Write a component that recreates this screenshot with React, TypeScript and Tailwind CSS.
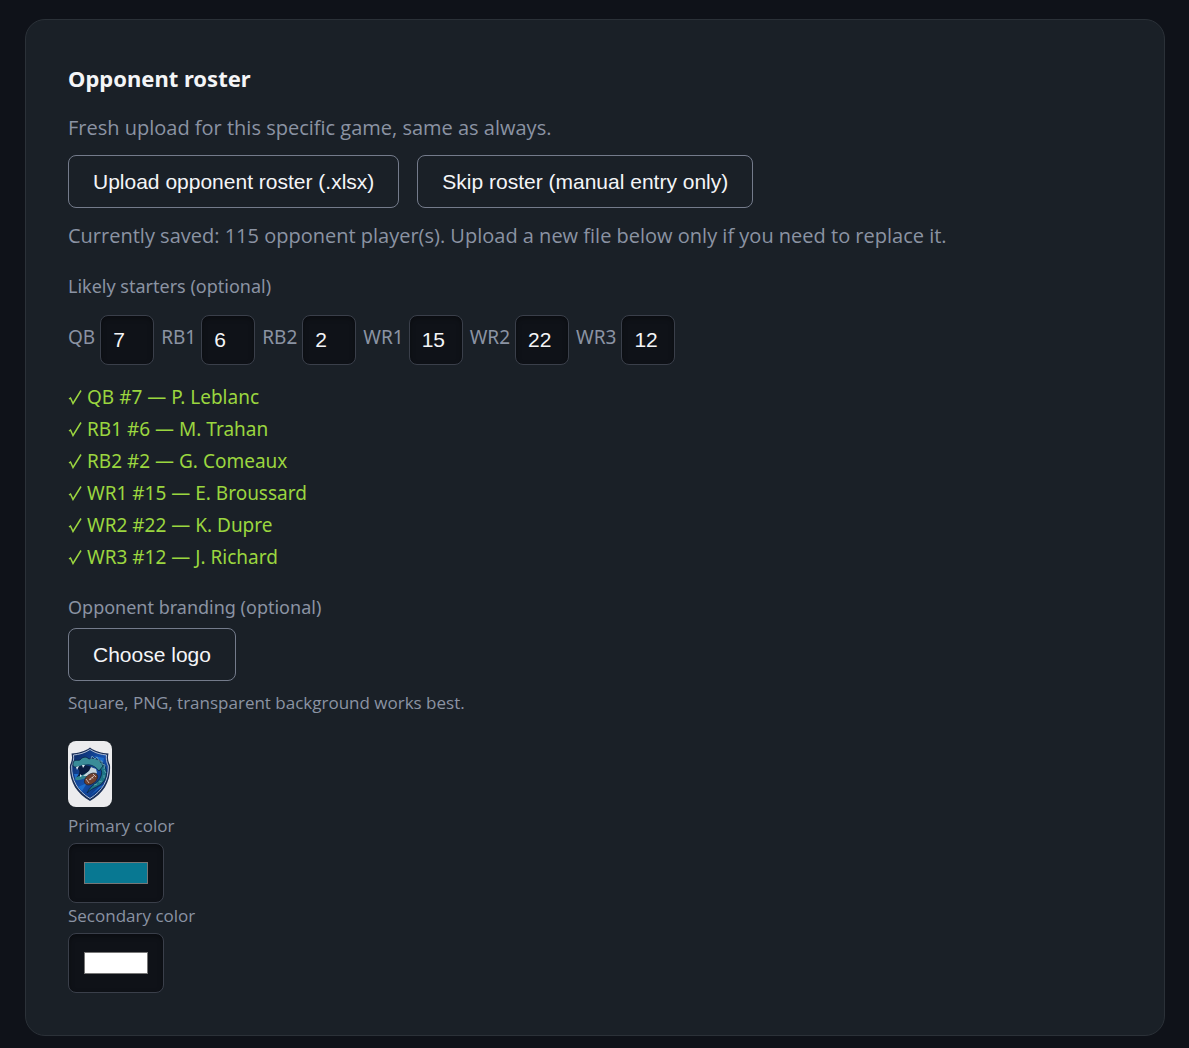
import React, { useState } from 'react';

interface Starter {
  position: string;
  number: string;
  player: string;
}

const initialStarters: Starter[] = [
  { position: 'QB', number: '7', player: 'P. Leblanc' },
  { position: 'RB1', number: '6', player: 'M. Trahan' },
  { position: 'RB2', number: '2', player: 'G. Comeaux' },
  { position: 'WR1', number: '15', player: 'E. Broussard' },
  { position: 'WR2', number: '22', player: 'K. Dupre' },
  { position: 'WR3', number: '12', player: 'J. Richard' },
];

const OutlineButton: React.FC<{ children: React.ReactNode }> = ({ children }) => (
  <button
    type="button"
    className="h-[53px] rounded-lg border border-[#747b8b] px-6 font-['Liberation_Sans',sans-serif] text-[21px] text-[#f4f5f7]"
  >
    {children}
  </button>
);

const ColorField: React.FC<{ id: string; label: string; initial: string }> = ({ id, label, initial }) => {
  const [color, setColor] = useState(initial);

  return (
    <div>
      <label htmlFor={id} className="mb-1 block text-[17px] leading-[26px]">
        {label}
      </label>
      <input
        id={id}
        type="color"
        value={color}
        onChange={(e) => setColor(e.target.value)}
        className="block h-[60px] w-24 rounded-lg border border-[#3a3f4a] bg-[#0f1218] px-[13px] py-[14px] shadow-[inset_0_2px_5px_rgba(0,0,0,0.35)]"
      />
    </div>
  );
};

const TeamLogo: React.FC = () => (
  <svg viewBox="0 0 44 66" className="block h-[66px] w-11 rounded-lg bg-[#ececee]" role="img" aria-label="Opponent logo">
    <defs>
      <linearGradient id="shield" x1="0" y1="0" x2="1" y2="1">
        <stop offset="0" stopColor="#0c2356" />
        <stop offset="0.5" stopColor="#1450ac" />
        <stop offset="1" stopColor="#0b2a6b" />
      </linearGradient>
    </defs>
    <path
      d="M22 6.5C17 10.5 10 12 3.5 12.5C4.5 17 4 20 2 24C1 40 8 52 22 60C36 52 43 40 42 24C40 20 39.5 17 40.5 12.5C34 12 27 10.5 22 6.5Z"
      fill="#1a2f58"
    />
    <path
      d="M22 8.5C17 12 11 13.5 5.5 14C6 18 5.5 21 3.7 25C3.3 39 9.5 50 22 57.5C34.5 50 40.7 39 40.3 25C38.5 21 38 18 38.5 14C33 13.5 27 12 22 8.5Z"
      fill="url(#shield)"
      stroke="#bccbe1"
      strokeWidth="0.9"
    />
    <path d="M6 33L12 33L8 40ZM10 46L19 42L14 50ZM22 55L31 46L37 43ZM26 15L36 17L35 22Z" fill="#1d6dcc" />
    {/* tail */}
    <path
      d="M31 19C38 23 41 33 36 40C32 46 25 46 19 52C23 43 31 42 33 35C35 30 32 26 28 25Z"
      fill="#1d7586"
      stroke="#0a2544"
      strokeWidth="0.8"
    />
    {/* mouth */}
    <path d="M8 26C14 23 21 24 26 27L24 34C18 33 12 35 8 37C13 31 12 29 8 26Z" fill="#0a1c40" />
    {/* lower jaw */}
    <path d="M7 37C12 34 17 34 21 30L24 34C20 36 13 40 8 39Z" fill="#318491" />
    <path d="M15 35L21 30L23 26L28 28L29 32L24 35Z" fill="#c4d3dd" />
    {/* upper jaw */}
    <path
      d="M5 22C6 18 9 20 12 19C14 16 18 15 21 18C26 16 32 18 35 25L31 30C28 26 23 23 18 24C13 24 8 28 5 25Z"
      fill="#3a8c98"
      stroke="#0a2544"
      strokeWidth="0.8"
    />
    <path d="M8 26L9 29L11 25ZM14 24L15 27L17 24ZM12 36L12 33L14 35Z" fill="#dae8f0" />
    <path d="M23 18L24 15L27 18L29 16L31 20L34 20L34 23L37 24L36 28" fill="none" stroke="#75a5b7" strokeWidth="0.8" />
    <path d="M36 29L38 32M36 34L36 37M34 40L31 41M29 43L26 44" stroke="#67a9b2" strokeWidth="0.8" />
    <ellipse cx="23" cy="38" rx="7.5" ry="4.8" transform="rotate(-38 23 38)" fill="#70402f" stroke="#26232b" strokeWidth="0.7" />
    <path d="M21 39L26 35M22 37.5L23 39M24 36L25 37.5M18 38L21 42M25 33L28 36" stroke="#eee9e6" strokeWidth="0.7" />
  </svg>
);

export default function App() {
  const [starters, setStarters] = useState(initialStarters);

  const updateNumber = (position: string, number: string) => {
    setStarters(starters.map((s) => (s.position === position ? { ...s, number } : s)));
  };

  return (
    <main className="min-h-screen bg-[#0f1219] pt-[19px] pr-6 pb-3 pl-[25px] font-['Open_Sans','Noto_Sans',sans-serif] text-[#8b93a3]">
      <section className="rounded-[20px] border border-[#2b3138] bg-[#1a2027] px-[42px] pt-10 pb-[42px]">
        <h2 className="font-['Noto_Sans',sans-serif] text-[22px] leading-9 font-bold text-[#f4f5f7]">Opponent roster</h2>
        <p className="mt-[15px] text-[20px] leading-[34px]">Fresh upload for this specific game, same as always.</p>
        <div className="mt-[10px] flex flex-wrap gap-[18px]">
          <OutlineButton>Upload opponent roster (.xlsx)</OutlineButton>
          <OutlineButton>Skip roster (manual entry only)</OutlineButton>
        </div>
        <p className="mt-[11px] text-[20px] leading-[34px]">
          Currently saved: 115 opponent player(s). Upload a new file below only if you need to replace it.
        </p>

        <h3 className="mt-[17px] font-['Noto_Sans',sans-serif] text-[18px] leading-8">Likely starters (optional)</h3>
        <div className="mt-[13px] flex flex-wrap gap-[7px]">
          {starters.map((s) => (
            <div key={s.position} className="flex gap-[5px]">
              <label htmlFor={s.position} className="pt-[6px] font-['Noto_Sans',sans-serif] text-[19px] leading-8">
                {s.position}
              </label>
              <input
                id={s.position}
                type="text"
                inputMode="numeric"
                value={s.number}
                onChange={(e) => updateNumber(s.position, e.target.value)}
                className="h-[50px] w-[54px] rounded-lg border border-[#3a3f4a] bg-[#0f1218] px-3 font-['Liberation_Sans',sans-serif] text-[21px] text-[#f4f5f7] shadow-[inset_0_2px_5px_rgba(0,0,0,0.35)]"
              />
            </div>
          ))}
        </div>
        <ul className="mt-4 font-['Noto_Sans',sans-serif] text-[19px] leading-8 text-[#9bd63f]">
          {starters.map((s) => (
            <li key={s.position} className="flex items-center gap-[5px]">
              <svg viewBox="0 0 14 16" className="h-4 w-[14px]" fill="none" stroke="currentColor" aria-hidden="true">
                <path d="M1 10L2.5 9L5 14.5L13 1.5" strokeWidth="1.5" />
              </svg>
              <span>
                {s.position} #{s.number} — {s.player}
              </span>
            </li>
          ))}
        </ul>

        <h3 className="mt-[18px] mb-[5px] font-['Noto_Sans',sans-serif] text-[18px] leading-8">
          Opponent branding (optional)
        </h3>
        <OutlineButton>Choose logo</OutlineButton>
        <p className="mt-[9px] mb-[25px] text-[17px] leading-[26px]">Square, PNG, transparent background works best.</p>
        <TeamLogo />
        <div className="mt-[6px]">
          <ColorField id="primary-color" label="Primary color" initial="#087892" />
          <ColorField id="secondary-color" label="Secondary color" initial="#ffffff" />
        </div>
      </section>
    </main>
  );
}
